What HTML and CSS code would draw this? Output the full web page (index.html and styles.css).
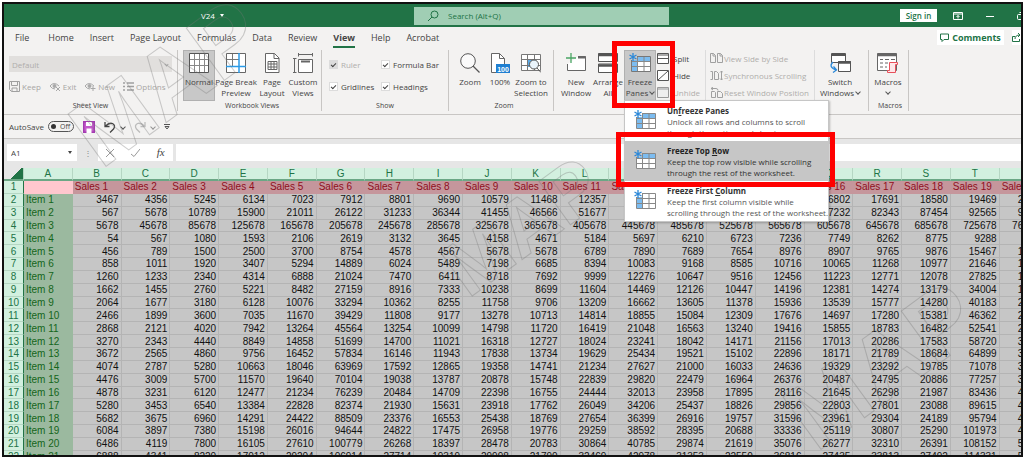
FILE: index.html
```html
<!DOCTYPE html>
<html lang="en">
<head>
<meta charset="utf-8">
<title>V24</title>
<link rel="stylesheet" href="styles.css">
</head>
<body>
<svg class="defs" aria-hidden="true">
  <defs>
    <g id="flake" fill="none" stroke="#2b88d8" stroke-width="1.3"><path d="M4 0v8M.5 2l7 4M7.500 2l-7 4"/></g>
    <g id="eye" fill="none" stroke="#a8a8a8"><path d="M1 5q4-5 9 0M1 5q2 3 5 3"/><circle cx="5.500" cy="5" r="1.500" fill="#a8a8a8"/></g>
  </defs>
</svg>
<div class="app">
  <header class="titlebar">
    <div class="doc">V24 <span class="tri"></span></div>
    <label class="search">
      <svg width="12" height="12" viewBox="0 0 12 12" fill="none" stroke="#217346"><circle cx="7.500" cy="4.500" r="3.500"/><path d="M5 7L1 11"/></svg>
      <input type="text" placeholder="Search (Alt+Q)" aria-label="Search">
    </label>
    <div class="wincontrols">
      <button class="signin">Sign in</button>
      <button aria-label="Ribbon display options"><svg width="10" height="8" viewBox="0 0 10 8" fill="none" stroke="#fff"><path d="M.5.5h9v7h-9zM.5 2h9M5 6.500V3.500M3.500 5L5 3.500 6.500 5"/></svg></button>
      <button aria-label="Minimize"><svg width="8" height="8" viewBox="0 0 8 8" stroke="#fff"><path d="M0 4.500h8"/></svg></button>
      <button class="restore" aria-label="Restore"><svg width="8" height="8" viewBox="0 0 8 8" fill="none" stroke="#fff"><rect x=".5" y="2.500" width="5" height="5" rx="1"/><path d="M2.500.5h3q2 0 2 2v3"/></svg></button>
    </div>
  </header>

  <nav class="tabs">
    <a href="#" class="file">File</a><a href="#">Home</a><a href="#">Insert</a><a href="#">Page Layout</a><a href="#">Formulas</a><a href="#">Data</a><a href="#">Review</a><a href="#" class="active">View</a><a href="#">Help</a><a href="#">Acrobat</a>
    <div class="tabactions">
      <button><svg width="9" height="9" viewBox="0 0 9 9" fill="none" stroke="#217346"><path d="M.5 1h8v5.500H4l-2 2v-2H.5z"/></svg>Comments</button>
      <button class="share" aria-label="Share"><svg width="9" height="9" viewBox="0 0 9 9" fill="none" stroke="#217346"><path d="M3 3.500H.5v5h7V6M3 6q0-4 5-4M6 0l2 2-2 2"/></svg></button>
    </div>
  </nav>

  <section class="ribbon">
    <div class="group g-sheet">
      <div class="body stack">
        <div class="picker"><select disabled aria-label="Sheet view"><option>Default</option></select><i class="chev"></i></div>
        <div class="sheetbtns">
          <button disabled><svg width="11" height="11" viewBox="0 0 11 11" fill="none" stroke="#a0a0a0"><path d="M.5.5h10v10h-8l-2-2zM2.500.5v4h6v-4M3 10.500V7h5v3.500"/></svg>Keep</button>
          <button disabled><svg width="12" height="11" viewBox="0 0 12 11"><use href="#eye"/><path d="M7 6l4 4M11 6l-4 4" stroke="#a8a8a8"/></svg>Exit</button>
          <button disabled><svg width="12" height="11" viewBox="0 0 12 11"><use href="#eye"/><path d="M9 5v5M6.500 7.500h5" stroke="#a8a8a8"/></svg>New</button>
          <button disabled><svg width="11" height="9" viewBox="0 0 11 9" stroke="#a0a0a0" stroke-width="1.400"><path d="M0 1h2M0 4.500h2M0 8h2M4 1h7M4 4.500h7M4 8h7"/></svg>Options</button>
        </div>
      </div>
      <h2>Sheet View</h2>
    </div>

    <div class="group g-book">
      <div class="body">
        <button class="big on"><svg width="20" height="20" viewBox="0 0 20 20"><path d="M.5.5h19v19H.5z" fill="#fff" stroke="#555"/><path d="M5.500 1v18M10.500 1v18M15.500 1v18M1 6.500h18M1 12.500h18" stroke="#888"/></svg><span>Normal</span></button>
        <button class="big wide"><svg width="20" height="20" viewBox="0 0 20 20" fill="none"><path d="M.5.5h19v19H.5z" fill="#fff" stroke="#666"/><path d="M6.500 1v12M1 6.500h12" stroke="#777"/><path d="M13 0v20M0 13.500h20" stroke="#2b9be8" stroke-width="1.500"/></svg><span>Page Break<br>Preview</span></button>
        <button class="big slim"><svg width="20" height="20" viewBox="0 0 20 20" fill="none" stroke="#666"><path d="M3.500.5h9l4.500 4.500v14.500H3.500z" fill="#fff"/><path d="M12 .5V5.500h5M6 8.500h9v8H6zM6 11h9M6 14h9M9 8.500v8M12 8.500v8"/></svg><span>Page<br>Layout</span></button>
        <button class="big"><svg width="20" height="20" viewBox="0 0 20 20" fill="none" stroke="#666"><path d="M5.500 6.500h14v13h-14z" fill="#fff"/><path d="M8 8.500h9" stroke-width="2"/><path d="M5.500 1.500h14M5.500 0v3.500M19.500 0v3.500M1.500 6v13M0 5.500h3.500M0 19.500h3.500"/></svg><span>Custom<br>Views</span></button>
      </div>
      <h2>Workbook Views</h2>
    </div>

    <div class="group g-show">
      <div class="body checks">
        <label class="dim"><input type="checkbox" checked disabled>Ruler</label>
        <label><input type="checkbox" checked>Formula Bar</label>
        <label><input type="checkbox" checked>Gridlines</label>
        <label><input type="checkbox" checked>Headings</label>
      </div>
      <h2>Show</h2>
    </div>

    <div class="group g-zoom">
      <div class="body">
        <button class="big slim"><svg width="20" height="20" viewBox="0 0 20 20" fill="none" stroke="#555"><circle cx="8" cy="8" r="7.300" fill="#fafafa"/><path d="M13 13l6.500 6.500" stroke-width="1.300"/></svg><span>Zoom</span></button>
        <button class="big slim"><svg width="20" height="20" viewBox="0 0 20 20" fill="none" stroke="#666"><path d="M1.500.5h8l5 5v14h-13z" fill="#fff"/><path d="M9.500.5v5h5"/><path d="M6 11h14v9H6z" fill="#1f7fd1" stroke="none"/><text x="13" y="18.500" class="hundred" text-anchor="middle">100</text></svg><span>100%</span></button>
        <button class="big"><svg width="20" height="20" viewBox="0 0 20 20" fill="none" stroke="#777"><path d="M.5 1.500h19v16H.5z" fill="#fff"/><path d="M6 6h9v8H6z" fill="#5aa9e6" stroke="none"/><path d="M6.500 1v16M13.500 1v16M.5 6.500h19M.5 12.500h19"/><circle cx="13" cy="11.500" r="4.500" fill="#eaf4fc" stroke="#555"/><path d="M16 15l4 4.500" stroke="#555"/></svg><span>Zoom to<br>Selection</span></button>
      </div>
      <h2>Zoom</h2>
    </div>

    <div class="group g-window">
      <div class="body">
        <button class="big"><svg width="20" height="20" viewBox="0 0 20 20" fill="none" stroke="#666"><path d="M12 3.500h7.500v14h-18V11" fill="#fff"/><path d="M12 4.500h8" stroke-width="2"/><path d="M5 0v10M0 5h10" stroke="#4aa564" stroke-width="1.300"/></svg><span>New<br>Window</span></button>
        <button class="big"><svg width="20" height="20" viewBox="0 0 20 20" fill="#fff" stroke="#555"><path d="M.5.5h19v8H.5zM.5 11h19v8.500H.5z"/><path d="M0 2h20M0 12.500h20" stroke-width="2.500"/></svg><span>Arrange<br>All</span></button>
        <div class="freeze">
          <button class="big on" aria-expanded="true"><svg width="22" height="20" viewBox="0 0 22 20"><path d="M2.500 3.500h19v15h-19z" fill="#fff" stroke="#777"/><path d="M3 4h18v5H3zM3 4h6v14H3z" fill="#7cbcf0"/><path d="M8.500 4v14M15 4v14M3 8.500h18M3 13.500h18" stroke="#888"/><path d="M0 0h8v7H0z" fill="#c8c8c8"/><use href="#flake"/></svg><span>Freeze<br>Panes <i class="chev"></i></span></button>
          <div class="callout callout-button"></div>
          <div class="menu" role="menu">
            <button role="menuitem"><svg width="22" height="20" viewBox="0 0 22 20"><path d="M2.500 3.500h19v15h-19z" fill="#fff" stroke="#888"/><path d="M3 4h18v5H3zM3 4h6v14H3z" fill="#7cbcf0"/><path d="M8.500 4v14M15 4v14M3 8.500h18M3 13.500h18" stroke="#888"/><path d="M0 0h8v7H0z" fill="#fff"/><use href="#flake"/></svg><span><b>Un<u>f</u>reeze Panes</b>Unlock all rows and columns to scroll<br>through the entire worksheet.</span></button>
            <button role="menuitem" class="hover"><svg width="22" height="20" viewBox="0 0 22 20"><path d="M2.500 3.500h19v15h-19z" fill="#fff" stroke="#888"/><path d="M3 4h18v5H3z" fill="#7cbcf0"/><path d="M8.500 4v14M15 4v14M3 8.500h18M3 13.500h18" stroke="#888"/><path d="M0 0h8v7H0z" fill="#c6c6c6"/><use href="#flake"/></svg><span><b>Freeze Top <u>R</u>ow</b>Keep the top row visible while scrolling<br>through the rest of the worksheet.</span></button>
            <button role="menuitem"><svg width="22" height="20" viewBox="0 0 22 20"><path d="M2.500 3.500h19v15h-19z" fill="#fff" stroke="#888"/><path d="M3 4h6v14H3z" fill="#7cbcf0"/><path d="M8.500 4v14M15 4v14M3 8.500h18M3 13.500h18" stroke="#888"/><path d="M0 0h8v7H0z" fill="#fff"/><use href="#flake"/></svg><span><b>Freeze First <u>C</u>olumn</b>Keep the first column visible while<br>scrolling through the rest of the worksheet.</span></button>
            <div class="callout callout-item"></div>
          </div>
        </div>
        <div class="small split">
          <button><svg width="12" height="11" viewBox="0 0 12 11" fill="#fff" stroke="#555"><path d="M.5.5h11v10H.5zM.5 5.500h11M.5 2h11"/></svg>Split</button>
          <button><svg width="12" height="11" viewBox="0 0 12 11" fill="#fff" stroke="#555"><path d="M.5.5h11v10H.5zM1 10L11 1"/></svg>Hide</button>
          <button disabled><svg width="12" height="11" viewBox="0 0 12 11" fill="#eee" stroke="#999"><path d="M.5.5h11v10H.5zM.5 2h11"/></svg>Unhide</button>
        </div>
        <div class="small side">
          <button disabled><svg width="13" height="11" viewBox="0 0 13 11" fill="none" stroke="#a0a0a0"><path d="M.5.5h3l2 2v7h-5zM7.500.5h3l2 2v7h-5zM3 .5v2.500h2.500M10 .5V3h2.500"/></svg>View Side by Side</button>
          <button disabled><svg width="13" height="11" viewBox="0 0 13 11" fill="none" stroke="#a0a0a0"><path d="M.5 1.500h2v8h-2M4.500 1.500h2l2 2v6h-4zM11.500 1v9M10 2.500L11.500 1 13 2.500M10 8.500l1.500 1.500L13 8.500"/></svg>Synchronous Scrolling</button>
          <button disabled><svg width="13" height="11" viewBox="0 0 13 11" fill="none" stroke="#a0a0a0"><path d="M1.500 4.500h3l1 1v5h-4zM7.500 4.500h3l2 2v4h-5zM1 1.500h5q2 0 2 2M3 0L1 1.500 3 3"/></svg>Reset Window Position</button>
        </div>
        <button class="big switch"><svg width="22" height="20" viewBox="0 0 22 20" fill="#fff" stroke="#555"><path d="M2.500.5h14v9h-14z"/><path d="M2 2h15" stroke-width="2"/><path d="M9.500 8.500h12v10h-12z"/><path d="M9 9.500h13" stroke-width="2.500"/><path d="M4 9q-5 5 3 8M4.500 13.500L7.500 17 4 19.500" fill="none" stroke="#2b88d8" stroke-width="1.300"/></svg><span>Switch<br>Windows <i class="chev"></i></span></button>
      </div>
    </div>

    <div class="group g-macros">
      <div class="body">
        <button class="big"><svg width="22" height="20" viewBox="0 0 22 20" fill="#fff" stroke="#666"><path d="M.5.5h19v17H.5z"/><path d="M0 2h20" stroke-width="2.500"/><path d="M3 6.500h3M8 6.500h4M14 6.500h4M3 10h3M8 10h3M3 14h3M8 14h2"/><path d="M12.500 9.500h8v2h-2v8h-8v-2h2z" fill="#fde7e9" stroke="#e8505b"/></svg><span>Macros<br><i class="chev"></i></span></button>
      </div>
      <h2>Macros</h2>
    </div>
  </section>

  <div class="quick">
    <label class="autosave">AutoSave <button role="switch" aria-checked="false"><i></i>Off</button></label>
    <button aria-label="Save"><svg width="12" height="12" viewBox="0 0 12 12"><path d="M.7.7h10.600v10.600H.7z" fill="#c45bcb" stroke="#a33bb0" stroke-width="1.400"/><path d="M3 1h6v4H3zM3.500 7.500h5V12h-5z" fill="#fff"/></svg></button>
    <button aria-label="Undo"><svg width="12" height="12" viewBox="0 0 12 12" fill="none" stroke="#444" stroke-width="1.300"><path d="M1 1v4.500h4.500M1.500 5Q5 1.500 8.500 2.500 12 4.500 9.500 8L6 11.500"/></svg><i class="chev"></i></button>
    <button aria-label="Redo" class="faded"><svg width="12" height="12" viewBox="0 0 12 12" fill="none" stroke="#999" stroke-width="1.300"><path d="M11 1v4.500H6.500M10.500 5Q7 1.500 3.500 2.500 0 4.500 2.500 8L6 11.500"/></svg><i class="chev"></i></button>
    <button aria-label="Customize"><svg width="6" height="6" viewBox="0 0 6 6" fill="none" stroke="#555"><path d="M0 .5h6M1 2.500h4L3 5z"/></svg></button>
  </div>

  <div class="formulabar">
    <div class="namebox"><input type="text" value="A1" aria-label="Name box"><span class="tri"></span></div>
    <span class="grip">⋮</span>
    <div class="fxbox">
      <button aria-label="Cancel"><svg width="8" height="8" viewBox="0 0 8 8" stroke="#999"><path d="M0 0l8 8M8 0L0 8"/></svg></button>
      <button aria-label="Enter"><svg width="9" height="8" viewBox="0 0 9 8" fill="none" stroke="#999"><path d="M0 5l3 2.500L9 0"/></svg></button>
      <button class="fx">fx</button>
    </div>
    <input class="formula" type="text" aria-label="Formula">
  </div>

  <main class="sheet">
    <table>
      <thead><tr id="letters"></tr></thead>
      <tbody id="rows"></tbody>
    </table>
  </main>

  <svg class="watermark" viewBox="0 0 1024 458" aria-hidden="true">
    <text transform="translate(101 170) rotate(-36)">MAP</text>
    <text transform="translate(468 299) rotate(-36)" class="lesser">MAP</text>
    <text transform="translate(816 453) rotate(-36)">MAP</text>
  </svg>
</div>
<script src="script.js"></script>
</body>
</html>
```
FILE: script.js
```js
// Items 1-3 are single series; items 4 onwards continue a per-column series.
const firstItems = [[3467, 889], [567, 5111], [5678, 40000]];
const itemFive = [456, 789, 1500, 2500, 3700, 8754, 4578, 4567, 5678, 5678,
  6789, 7890, 7689, 7654, 8976, 8907, 9765, 9876, 15467, 12345];
const columns = itemFive.length;

function value(item, col) {
  if (item <= 3) {
    const [start, step] = firstItems[item - 1];
    return start + step * col;
  }
  const base = 54 + 513 * col;
  return base + (itemFive[col] - base) * (item - 4);
}

const letters = document.getElementById('letters');
letters.innerHTML = '<th class="corner"></th>' +
  Array.from({ length: columns + 1 }, (_, c) =>
    `<th scope="col">${c < columns ? String.fromCharCode(65 + c) : ''}</th>`).join('');

let html = '';
for (let r = 0; r <= 21; r++) {
  html += `<tr class="${r ? '' : 'head'}"><th scope="row">${r + 1}</th>`;
  html += `<td class="item">${r ? 'Item ' + r : ''}</td>`;
  for (let c = 0; c < columns; c++) {
    html += `<td>${r ? value(r, c) : 'Sales ' + (c + 1)}</td>`;
  }
  html += '</tr>';
}
document.getElementById('rows').innerHTML = html;
```
FILE: styles.css
```css
* { box-sizing: border-box; }
body {
  margin: 0;
  padding: 2px 1px 1px 2px;
  height: 100vh;
  background: #fff;
  color: #444;
  font: 8px/11px "Open Sans", "Noto Sans", sans-serif;
}
button, input, select { font: inherit; color: inherit; border: 0; background: none; padding: 0; margin: 0; }
svg { flex: none; display: block; }
.defs { position: absolute; width: 0; height: 0; }
.app {
  position: relative;
  height: 100%;
  border: 2px solid #111;
  background: #f3f2f1;
  display: flex;
  flex-direction: column;
  overflow: hidden;
}
.tri { display: inline-block; border: 2px solid transparent; border-top: 3px solid currentColor; border-bottom: 0; }
.chev {
  display: inline-block; width: 4px; height: 4px;
  border: solid #555; border-width: 0 1px 1px 0;
  transform: rotate(45deg); vertical-align: 2px;
}

.titlebar { flex: none; height: 23px; background: #217346; color: #fff; display: flex; align-items: center; }
.doc { width: 410px; padding-left: 197px; display: flex; align-items: center; gap: 5px; }
.search { flex: none; width: 255px; height: 18px; background: #a0ceb4; display: flex; align-items: center; gap: 9px; padding-left: 13px; }
.search input { flex: 1; min-width: 0; color: #217346; }
.search input::placeholder { color: #217346; opacity: 1; }
.wincontrols { margin-left: auto; display: flex; align-items: center; gap: 23px; margin-right: -4px; }
.signin { background: #fff; color: #217346; width: 37px; height: 13px; margin-right: -7px; font-weight: 600; }

.tabs { flex: none; height: 21px; display: flex; align-items: center; padding-left: 11px; gap: 16px; font-size: 9px; }
.tabs a { color: #444; text-decoration: none; line-height: 19px; white-space: nowrap; }
.tabs .file { margin-right: 3px; }
.tabs .active { font-weight: 700; border-bottom: 2px solid #217346; height: 20px; }
.tabactions { margin-left: auto; display: flex; gap: 8px; }
.tabactions button { background: #fff; color: #217346; font-weight: 700; width: 67px; height: 15px; display: flex; align-items: center; justify-content: center; gap: 3px; }
.tabactions .share { width: 9px; justify-content: flex-start; overflow: hidden; }

.ribbon { flex: none; height: 67px; display: flex; border-bottom: 1px solid #c8c6c4; padding: 2px 0 3px; }
.group { display: flex; flex-direction: column; border-right: 1px solid #c8c6c4; flex: none; }
.group h2 { margin: auto 0 0; font-size: 7px; font-weight: 400; line-height: 10px; text-align: center; }
.body { display: flex; height: 51px; }
.g-sheet { width: 174px; padding: 0 5px; }
.g-book { width: 144px; padding-left: 5px; }
.g-show { width: 127px; padding: 0 7px; }
.g-zoom { width: 105px; padding-left: 6px; }
.g-window { width: 315px; padding-left: 6px; }
.g-macros { width: 40px; padding-left: 3px; }
.big { width: 32px; height: 51px; display: flex; flex-direction: column; align-items: center; padding-top: 3px; gap: 3px; flex: none; white-space: nowrap; }
.big.on { background: #c8c8c8; outline: 1px solid #b0b0b0; outline-offset: -1px; }
.big.wide { width: 42px; }
.big.slim { width: 30px; }
.big .hundred { font: 700 7px "Liberation Sans", sans-serif; fill: #fff; stroke: none; }

.stack { flex-direction: column; gap: 9px; padding-top: 6px; }
.picker { width: 163px; height: 16px; background: #e1dfdd; display: flex; align-items: center; padding: 0 4px 0 3px; }
.picker select { appearance: none; flex: 1; color: #b0aeac; opacity: 1; }
.picker .chev { border-color: #aaa; width: 3px; height: 3px; }
.sheetbtns { display: flex; gap: 8px; }
.sheetbtns button { display: flex; align-items: center; gap: 2px; color: #a8a6a4; }
.checks { display: grid; grid-template-columns: 52px 1fr; align-content: start; gap: 11px 0; padding-top: 9px; }
.checks label { display: flex; align-items: center; gap: 3px; white-space: nowrap; }
.checks .dim { color: #b0aeac; }
.checks input { appearance: none; width: 9px; height: 9px; background: #fff; display: grid; place-items: center; border: 1px solid #dcdcdc; }
.checks input::before { content: ""; width: 4px; height: 2px; border: solid #444; border-width: 0 0 1px 1px; transform: rotate(-45deg); }
.checks input:disabled { background: #dcdcdc; }

.small { display: flex; flex-direction: column; gap: 6px; padding-top: 3px; flex: none; }
.small button { display: flex; align-items: center; gap: 4px; white-space: nowrap; }
.small button:disabled { color: #b0aeac; }
.split { width: 50px; padding-left: 1px; border-right: 1px solid #dcdcdc; }
.side { width: 109px; padding-left: 4px; border-right: 1px solid #dcdcdc; }
.side button { gap: 1px; }
.big.switch { width: 50px; }

.freeze { position: relative; flex: none; }
.callout { position: absolute; border: 5px solid #f00; pointer-events: none; }
.callout-button { left: -12px; top: -9px; width: 63px; height: 67px; z-index: 3; }
.menu { position: absolute; left: 0; top: 50px; width: 205px; z-index: 2; background: #fff; border: 1px solid #c6c6c6; box-shadow: 1px 1px 2px rgba(0,0,0,.25); }
.menu button { display: flex; width: 100%; height: 40px; padding: 4px 0 0 9px; gap: 11px; text-align: left; color: #555; white-space: nowrap; }
.menu button svg { margin-top: 5px; }
.menu b { display: block; color: #333; }
.menu .hover { background: #c6c6c6; color: #333; }
.menu .hover b { color: #222; }
.callout-item { left: -9px; top: 31px; width: 219px; height: 55px; }

.quick { flex: none; height: 24px; display: flex; align-items: center; gap: 9px; padding-left: 5px; border-bottom: 1px solid #c8c6c4; }
.quick button { display: flex; align-items: center; gap: 5px; }
.autosave { display: flex; align-items: center; gap: 4px; }
.quick .autosave button { width: 26px; height: 11px; border: 1px solid #555; border-radius: 6px; font-size: 7px; gap: 4px; padding-left: 2px; }
.autosave i { width: 5px; height: 5px; border-radius: 50%; background: #333; }
.faded { opacity: .6; }

.formulabar { flex: none; height: 29px; background: #e6e6e6; padding: 5px 0 7px 3px; display: flex; }
.namebox { width: 70px; background: #fff; display: flex; align-items: center; padding: 0 5px 0 4px; }
.namebox input { flex: 1; min-width: 0; }
.grip { width: 21px; text-align: center; line-height: 17px; color: #888; }
.fxbox { width: 75px; background: #fff; display: flex; align-items: center; justify-content: space-around; margin-right: 3px; }
.fx { font: italic 11px/11px "Liberation Serif", serif; }
.formula { flex: 1; min-width: 0; background: #fff; }

.sheet { flex: 1; min-height: 0; overflow: hidden; background: #c6c6c6; }
table { width: 102.7%; height: 103%; table-layout: fixed; border-collapse: separate; border-spacing: 0; font: 10px/11px "Liberation Sans", Arial, sans-serif; color: #111; }
th, td { padding: 0; height: 12px; overflow: hidden; white-space: nowrap; }
th { background: #d2f0df; color: #217346; font-weight: 400; border-right: 1px solid #b5d6c3; }
thead th { border-bottom: 2px solid #6ba785; }
.corner { width: 20px; background: linear-gradient(135deg, #e6e6e6 60%, #217346 60%); }
tbody th { border-right: 1px solid #217346; border-bottom: 1px solid #b5d6c3; }
td { text-align: right; padding-right: 2px; border-right: 1px solid #b4b4b4; border-bottom: 1px solid #b4b4b4; }
.item { text-align: left; padding-left: 2px; background: #9bb99f; color: #14651a; border-color: #9bb99f; }
.head td { text-align: left; padding-left: 2px; background: #c5969c; color: #8f0f1c; border-color: #c5969c; }
.head .item { background: #ffc7ce; border-color: #ffc7ce; }

.watermark { position: absolute; inset: -4px 0 0 -4px; width: 1024px; height: 458px; pointer-events: none; z-index: 1; }
.watermark text { font: 700 94px "Liberation Sans Narrow", "Liberation Sans", sans-serif; fill: none; stroke: #777; stroke-width: 1px; opacity: .35; }
.watermark .lesser { font-size: 78px; }
```
